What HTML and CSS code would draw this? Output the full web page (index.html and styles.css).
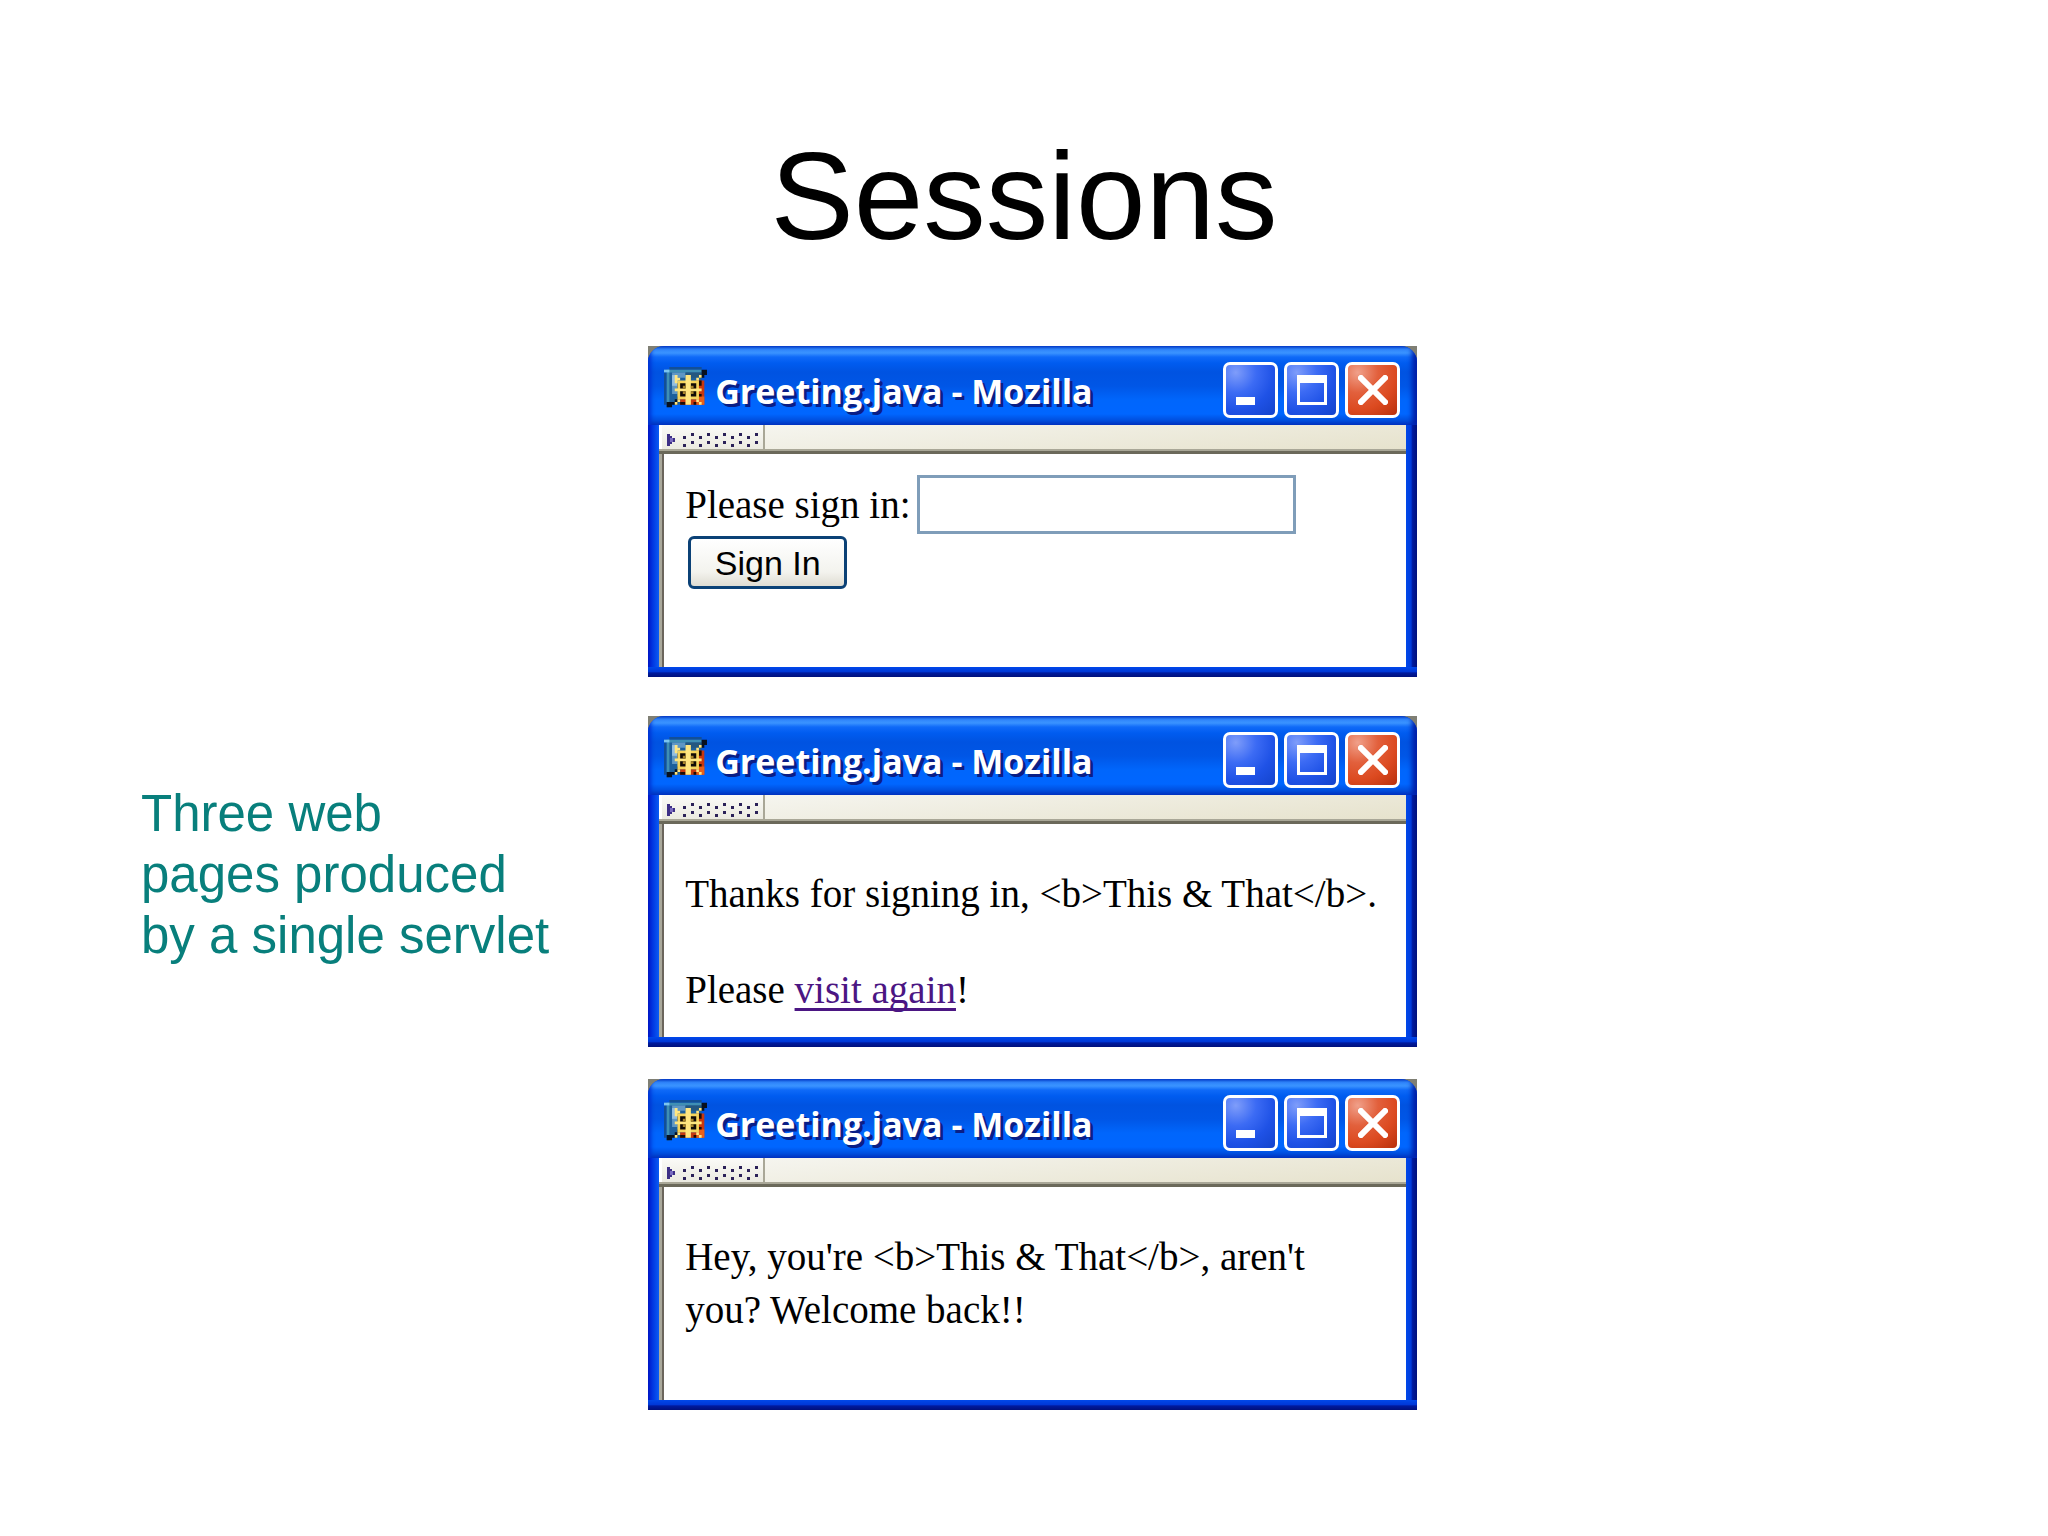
FILE: index.html
```html
<!DOCTYPE html>
<html lang="en">
<head>
  <meta charset="UTF-8">
  <meta name="viewport" content="width=device-width, initial-scale=1.0">
  <title>Sessions</title>
  <link rel="stylesheet" href="styles.css">
</head>
<body>
  <!-- Shared icons -->
  <svg class="sprite" aria-hidden="true">
    <symbol id="icon-app" viewBox="0 0 16 16">
      <path d="M1 1h13v13H2v1H1z" fill="#1d5f9c"/>
      <path d="M2 0h12v1H2zM0 2h1v12H0z" fill="#134f96"/>
      <path d="M1 1h13v1H2v11H1z" fill="#3f8fb4"/>
      <rect x="0" y="1" width="2" height="1" fill="#7cc4ee"/>
      <path d="M3 2h5v2H5v6H3z" fill="#5f97c4"/>
      <rect x="3" y="3" width="2" height="4" fill="#94bfe0"/>
      <path d="M8 2h6v2H8z" fill="#24577f"/>
      <path d="M12 5h3v9H6v-2h6z" fill="#c8380e"/>
      <path d="M13 11h2v3h-3v-1h1z" fill="#e8601a"/>
      <path d="M14 1h2v2h-1v1h-2V3h1zM1 15h2v-1h2v-1h1v-1H4v1H1z" fill="#07101f"/>
      <path d="M5 6h1v2H5zM5 11h1v1H5zM13 5h1v2h-1zM13 10h1v1h-1zM6 13h2v1H6zM11 13h1v1h-1z" fill="#1c0d06"/>
      <path d="M5 5h8v7H5z" fill="#f5d45c"/>
      <path d="M8 3h2v11H8zM4 8h10v1H4zM4 3h1v1h1v1H5v1H4zM13 3h1v1h-1zM12 4h1v1h-1zM5 12h1v1H5zM4 13h1v1H4zM12 12h1v1h-1zM13 13h1v1h-1z" fill="#ffe680"/>
      <path d="M6 6h2v2H6zM10 6h2v2h-2zM6 9h2v2H6zM10 9h2v2h-2z" fill="#120b06"/>
      <path d="M7 7h1v1H7zM10 7h1v1h-1zM7 9h1v1H7zM10 9h1v1h-1z" fill="#a8852c"/>
    </symbol>
    <symbol id="icon-grip" viewBox="0 0 92 16">
      <path d="M0 2h3v2h2v2h3v4H5v2H3v2H0z" fill="#3d2f86"/>
      <path d="M3 6h3v4H3z" fill="#7a6cc0"/>
      <path d="M16 4h3v3h-3zM16 12h3v3h-3zM32 4h3v3h-3zM32 12h3v3h-3zM48 4h3v3h-3zM48 12h3v3h-3zM64 4h3v3h-3zM64 12h3v3h-3zM80 4h3v3h-3zM80 12h3v3h-3z" fill="#2b2158"/>
      <path d="M24 1h3v3h-3zM24 9h3v3h-3zM40 1h3v3h-3zM40 9h3v3h-3zM56 1h3v3h-3zM56 9h3v3h-3zM72 1h3v3h-3zM72 9h3v3h-3zM88 1h3v3h-3zM88 9h3v3h-3z" fill="#2b2158"/>
    </symbol>
    <symbol id="icon-min" viewBox="0 0 30 30">
      <path d="M0 22h19v8H0z" fill="#fff"/>
    </symbol>
    <symbol id="icon-max" viewBox="0 0 30 30">
      <path d="M0 0h30v30H0zM3 8v19h24V8z" fill="#fff" fill-rule="evenodd"/>
    </symbol>
    <symbol id="icon-close" viewBox="0 0 30 30">
      <path d="M3 3l24 24M27 3L3 27" stroke="#fff" stroke-width="6" stroke-linecap="square"/>
    </symbol>
  </svg>

  <h1 class="title">Sessions</h1>

  <main class="slide">
    <p class="caption">Three web<br>pages produced<br>by a single servlet</p>

    <div class="windows">
      <section class="window">
        <div class="frame">
          <header class="titlebar">
            <svg class="app-icon"><use href="#icon-app"/></svg>
            <h2 class="window-title">Greeting.java - Mozilla</h2>
            <button class="ctl" type="button" aria-label="Minimize"><svg><use href="#icon-min"/></svg></button>
            <button class="ctl" type="button" aria-label="Maximize"><svg><use href="#icon-max"/></svg></button>
            <button class="ctl ctl-close" type="button" aria-label="Close"><svg><use href="#icon-close"/></svg></button>
          </header>
          <div class="toolbar"><div class="handle"><svg><use href="#icon-grip"/></svg></div></div>
          <div class="content">
            <form class="signin">
              <div class="signin-row">
                <label for="name">Please sign in:</label>
                <input class="signin-input" id="name" type="text">
              </div>
              <button class="signin-btn" type="button">Sign In</button>
            </form>
          </div>
        </div>
      </section>

      <section class="window window-thanks">
        <div class="frame">
          <header class="titlebar">
            <svg class="app-icon"><use href="#icon-app"/></svg>
            <h2 class="window-title">Greeting.java - Mozilla</h2>
            <button class="ctl" type="button" aria-label="Minimize"><svg><use href="#icon-min"/></svg></button>
            <button class="ctl" type="button" aria-label="Maximize"><svg><use href="#icon-max"/></svg></button>
            <button class="ctl ctl-close" type="button" aria-label="Close"><svg><use href="#icon-close"/></svg></button>
          </header>
          <div class="toolbar"><div class="handle"><svg><use href="#icon-grip"/></svg></div></div>
          <div class="content">
            <p>Thanks for signing in, &lt;b&gt;This &amp; That&lt;/b&gt;.</p>
            <p>Please <a href="#">visit again</a>!</p>
          </div>
        </div>
      </section>

      <section class="window window-welcome">
        <div class="frame">
          <header class="titlebar">
            <svg class="app-icon"><use href="#icon-app"/></svg>
            <h2 class="window-title">Greeting.java - Mozilla</h2>
            <button class="ctl" type="button" aria-label="Minimize"><svg><use href="#icon-min"/></svg></button>
            <button class="ctl" type="button" aria-label="Maximize"><svg><use href="#icon-max"/></svg></button>
            <button class="ctl ctl-close" type="button" aria-label="Close"><svg><use href="#icon-close"/></svg></button>
          </header>
          <div class="toolbar"><div class="handle"><svg><use href="#icon-grip"/></svg></div></div>
          <div class="content">
            <p>Hey, you're &lt;b&gt;This &amp; That&lt;/b&gt;, aren't you? Welcome back!!</p>
          </div>
        </div>
      </section>
    </div>
  </main>
</body>
</html>
```
FILE: styles.css
```css
* {
  box-sizing: border-box;
}
body {
  margin: 0;
  background: #fff;
  color: #000;
  font-family: "Liberation Sans", Arial, sans-serif;
}
.sprite {
  display: none;
}
.title {
  margin: 0;
  padding-top: 124px;
  font-size: 125px;
  font-weight: 400;
  line-height: 144px;
  text-align: center;
}
.slide {
  display: grid;
  grid-template-columns: 31.65% 37.54%;
  align-items: center;
  margin-top: 78px;
}
.caption {
  margin: 0;
  padding: 0 0 8px 141px;
  font-size: 51px;
  line-height: 61px;
  color: #087f7c;
  white-space: nowrap;
}

/* Windows */
.window {
  background: #7f7f74;
}
.window-thanks {
  margin-top: 39px;
}
.window-welcome {
  margin-top: 32px;
}
.frame {
  padding: 0 11px 10px;
  border-radius: 16px 16px 0 0;
  overflow: hidden;
  background:
    linear-gradient(#0048ea, #0038d8 45%, #001a9e 60%, #00107c) bottom / 100% 10px no-repeat,
    linear-gradient(to right, #0014c4, #0034e0 40%, #0a5cf4) left / 11px 100% no-repeat,
    linear-gradient(to right, #0048ea, #003cdc 45%, #001a9e 60%, #00107c) right / 11px 100% no-repeat;
}
.titlebar {
  display: flex;
  align-items: center;
  gap: 6px;
  height: 79px;
  margin: 0 -11px;
  padding: 15px 17px 7px 16px;
  background: linear-gradient(#0a50d4 0, #2f86fb 3px, #3a93ff 7px, #0f6af8 11px, #005cf0 17px, #0053e1 26px, #0056e6 40px, #0066fc 54px, #0066ff 68px, #0050e0 74px, #003cc4 79px);
  box-shadow: inset 4px 0 4px -1px #0030d0, inset -6px 0 5px -1px #0020a8;
}
.app-icon {
  flex: none;
  width: 43px;
  height: 43px;
  margin-bottom: 3px;
}
.window-title {
  flex: 1;
  margin: 0;
  padding: 2px 0 0 2px;
  font-family: "Open Sans", "Noto Sans", sans-serif;
  font-size: 34px;
  font-weight: 700;
  line-height: 44px;
  color: #fff;
  text-shadow: 3px 3px 0 #0a1e86;
}
.ctl {
  display: flex;
  align-items: center;
  justify-content: center;
  flex: none;
  width: 55px;
  height: 56px;
  padding: 0;
  border: 3px solid #fff;
  border-radius: 7px;
  background: radial-gradient(circle at 20% 15%, #7f9dfa, #3c6bf4 35%, #1f52e6 65%, #1343cc);
}
.ctl svg {
  width: 30px;
  height: 30px;
}
.ctl-close {
  background: radial-gradient(circle at 20% 15%, #f0a08a, #e2603c 35%, #dc4a20 65%, #b8300c);
}
.toolbar {
  height: 29px;
  border-bottom: 3px solid #6b695a;
  background: linear-gradient(175deg, #f7f7f3, #e6e2cc);
  box-shadow: inset 0 -2px 0 #a9a797;
}
.handle {
  width: 106px;
  height: 24px;
  padding: 7px 0 0 5px;
  border-left: 3px solid #fff;
  border-right: 2px solid #a9a797;
  background: linear-gradient(#fbfbf8, #ebeae0);
}
.handle svg {
  display: block;
  width: 92px;
  height: 16px;
}

/* Page shown in each window */
.content {
  display: flow-root;
  min-height: 213px;
  border-left: 3px solid #aaa99c;
  box-shadow: inset 2px 0 0 #6b655c;
  background: #fff;
  font-family: "Liberation Serif", "Times New Roman", serif;
  font-size: 39px;
  line-height: 53px;
}
.content p {
  margin: 43px 21px 43px 23px;
}
.content p + p {
  margin-bottom: 0;
}
.content a {
  color: #4b1683;
  text-decoration-thickness: 3px;
  text-underline-offset: 5px;
  text-decoration-skip-ink: none;
}
.signin {
  padding: 21px 21px 0 23px;
}
.signin-row {
  display: flex;
  align-items: center;
  gap: 6px;
}
.signin-input {
  width: 379px;
  height: 59px;
  padding: 0 8px;
  border: 3px solid #7f9db9;
  background: #fff;
  font: inherit;
}
.signin-btn {
  display: block;
  width: 159px;
  height: 53px;
  margin: 2px 3px 0;
  padding: 0;
  border: 3px solid #0b4176;
  border-radius: 6px;
  background: linear-gradient(#fff, #f3f3ee 70%, #dfdcd2);
  color: #000;
  font-family: "Liberation Sans", Arial, sans-serif;
  font-size: 34px;
  line-height: 44px;
}
```
